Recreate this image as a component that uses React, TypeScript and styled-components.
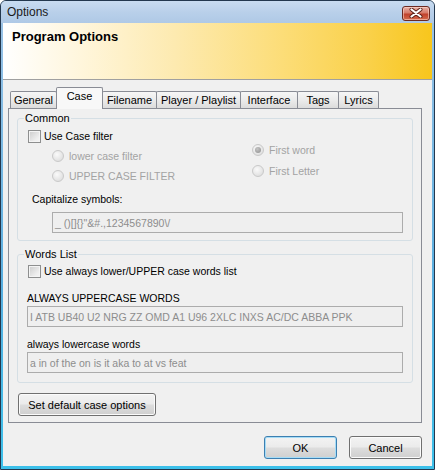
import React from "react";
import styled, { createGlobalStyle, css } from "styled-components";

const Global = createGlobalStyle`
  html, body { margin: 0; padding: 0; background: #ffffff; }
  body { font-family: "Liberation Sans", Arial, sans-serif; font-size: 10.5px; }
  * { box-sizing: border-box; }
`;

const Window = styled.div`
  width: 435px;
  height: 470px;
  border: 1px solid #23384f;
  border-radius: 6px 6px 0 0;
  background: linear-gradient(#9fc4e6, #58aee0 60%, #3cc0ea);
  display: flex;
  flex-direction: column;
  overflow: hidden;
`;

const TitleBar = styled.div`
  height: 22px;
  flex: 0 0 22px;
  display: flex;
  align-items: center;
  justify-content: space-between;
  padding: 0 4px 0 6px;
  background: linear-gradient(#c9dcf1, #b9d0ea 50%, #afc9e6);
`;

const TitleText = styled.span`
  font-family: "Liberation Sans", Arial, sans-serif;
  font-size: 12px;
  color: #1a1a1a;
`;

const CloseButton = styled.div`
  width: 28px;
  height: 15px;
  margin-top: 2px;
  border: 1px solid #6b2a22;
  border-radius: 3px;
  background: linear-gradient(#e8b0a6, #d67a69 45%, #c0412c 55%, #d46a4c);
  box-shadow: inset 0 0 0 1px rgba(255, 220, 210, 0.55);
  display: flex;
  align-items: center;
  justify-content: center;
`;

const Client = styled.div`
  flex: 1;
  margin: 0 2px 3px 2px;
  display: flex;
  flex-direction: column;
  background: #f0f0f0;
`;

const Header = styled.div`
  height: 57px;
  flex: 0 0 57px;
  border-bottom: 1px solid #a0a0a0;
  padding: 6px 0 0 9px;
  background: linear-gradient(
    90deg,
    #ffffff 0%,
    #fff6dc 18%,
    #fdeab0 40%,
    #fcdd78 65%,
    #fad14a 85%,
    #f8c61c 100%
  );
`;

const HeaderTitle = styled.div`
  font-family: "Liberation Sans", Arial, sans-serif;
  font-weight: bold;
  font-size: 13px;
  color: #000;
  line-height: 15px;
`;

const Body = styled.div`
  flex: 1;
  display: flex;
  flex-direction: column;
  padding: 7px 10px 0 5px;
`;

const TabRow = styled.div`
  height: 21px;
  display: flex;
  align-items: flex-end;
  padding-left: 2px;
`;

const Tab = styled.div<{ $w: number; $active?: boolean }>`
  width: ${(p) => p.$w}px;
  height: 17px;
  margin-left: -1px;
  border: 1px solid #898c95;
  border-bottom: none;
  border-radius: 2px 2px 0 0;
  background: linear-gradient(#f6f6f6, #ebebeb 50%, #dcdcdc 100%);
  display: flex;
  align-items: center;
  justify-content: center;
  color: #000;
  font-size: 11px;
  padding-bottom: 1px;
  &:first-child { margin-left: 0; }
  ${(p) =>
    p.$active &&
    css`
      height: 22px;
      margin-bottom: -1px;
      position: relative;
      z-index: 1;
      background: #f8f8f8;
      padding-bottom: 5px;
    `}
`;

const Panel = styled.div`
  height: 315px;
  border: 1px solid #898c95;
  background: #f0f0f0;
  padding: 9px 8px 0 8px;
  display: flex;
  flex-direction: column;
`;

const Group = styled.div<{ $h: number }>`
  position: relative;
  height: ${(p) => p.$h}px;
  border: 1px solid #d5dfe5;
  border-radius: 3px;
  display: flex;
  flex-direction: column;
  & + & { margin-top: 13px; }
`;

const GroupLabel = styled.span`
  position: absolute;
  top: -8px;
  left: 6px;
  padding: 0 1px;
  background: #f0f0f0;
  color: #000;
  font-size: 11px;
  line-height: 14px;
`;

const CheckRow = styled.label<{ $top: number }>`
  height: 20px;
  margin-top: ${(p) => p.$top}px;
  padding-left: 10px;
  display: flex;
  align-items: center;
  gap: 3px;
  color: #000;
`;

const CheckBox = styled.span`
  width: 13px;
  height: 13px;
  border: 1px solid #8e8f8f;
  background: linear-gradient(135deg, #cbcbcb, #eeeeee 70%, #f6f6f6);
  box-shadow: inset 0 0 0 1px #f4f4f4;
`;

const RadioArea = styled.div`
  display: flex;
`;

const RadioColumn = styled.div<{ $left: number; $shift?: number; $gap: number; $w: number }>`
  width: ${(p) => p.$w}px;
  margin-left: ${(p) => p.$left}px;
  margin-top: ${(p) => p.$shift ?? 0}px;
  display: flex;
  flex-direction: column;
  gap: ${(p) => p.$gap}px;
`;

const RadioRow = styled.div`
  height: 20px;
  display: flex;
  align-items: center;
  gap: 5px;
  color: #a3a3a3;
`;

const Radio = styled.span<{ $checked?: boolean }>`
  width: 12px;
  height: 12px;
  border-radius: 50%;
  border: 1px solid #c9c9c9;
  background: radial-gradient(circle at 40% 35%, #fafafa, #e2e2e2 70%, #d6d6d6);
  display: flex;
  align-items: center;
  justify-content: center;
  &::after {
    content: "";
    display: ${(p) => (p.$checked ? "block" : "none")};
    width: 6px;
    height: 6px;
    border-radius: 50%;
    background: radial-gradient(circle at 40% 35%, #c4c4c4, #8e8e8e);
  }
`;

const FieldLabel = styled.div<{ $top: number; $left: number }>`
  height: 16px;
  line-height: 16px;
  margin-top: ${(p) => p.$top}px;
  margin-left: ${(p) => p.$left}px;
  color: #000;
`;

const TextInput = styled.div<{ $top: number; $left: number; $w: number }>`
  height: 21px;
  width: ${(p) => p.$w}px;
  margin-top: ${(p) => p.$top}px;
  margin-left: ${(p) => p.$left}px;
  border: 1px solid #acacac;
  background: #efefef;
  color: #8d8d8d;
  padding: 0 2px;
  display: flex;
  align-items: center;
  white-space: pre;
`;

const Button = styled.div<{ $w: number; $focused?: boolean }>`
  width: ${(p) => p.$w}px;
  height: 23px;
  border: 1px solid #707070;
  border-radius: 3px;
  background: linear-gradient(#f3f3f3, #ebebeb 48%, #dddddd 52%, #cfcfcf);
  box-shadow: inset 0 0 0 1px #fbfbfb;
  display: flex;
  align-items: center;
  justify-content: center;
  color: #000;
  font-size: 11px;
  ${(p) =>
    p.$focused &&
    css`
      border-color: #3c7fb1;
      box-shadow: inset 0 0 0 1px #a6dcf6;
    `}
`;

const PanelButtonWrap = styled.div`
  margin: 10px 0 0 1px;
`;

const Footer = styled.div`
  display: flex;
  justify-content: flex-end;
  gap: 12px;
  margin-top: 13px;
`;

const CloseIcon = () => (
  <svg width="14" height="10" viewBox="0 0 14 10">
    <path d="M2.5 1.5 L11.5 8.5 M11.5 1.5 L2.5 8.5" stroke="#5a2018" strokeWidth="4" strokeLinecap="round" />
    <path d="M2.5 1.5 L11.5 8.5 M11.5 1.5 L2.5 8.5" stroke="#ffffff" strokeWidth="2.2" strokeLinecap="round" />
  </svg>
);

const tabs: { label: string; w: number; active?: boolean }[] = [
  { label: "General", w: 47 },
  { label: "Case", w: 47, active: true },
  { label: "Filename", w: 55 },
  { label: "Player / Playlist", w: 85 },
  { label: "Interface", w: 58 },
  { label: "Tags", w: 42 },
  { label: "Lyrics", w: 41 },
];

export default function App() {
  return (
    <>
      <Global />
      <Window>
        <TitleBar>
          <TitleText>Options</TitleText>
          <CloseButton>
            <CloseIcon />
          </CloseButton>
        </TitleBar>
        <Client>
          <Header>
            <HeaderTitle>Program Options</HeaderTitle>
          </Header>
          <Body>
            <TabRow>
              {tabs.map((t) => (
                <Tab key={t.label} $w={t.w} $active={t.active}>
                  {t.label}
                </Tab>
              ))}
            </TabRow>
            <Panel>
              <Group $h={123}>
                <GroupLabel>Common</GroupLabel>
                <CheckRow $top={7}>
                  <CheckBox />
                  Use Case filter
                </CheckRow>
                <RadioArea>
                  <RadioColumn $left={34} $gap={0} $w={200}>
                    <RadioRow>
                      <Radio />
                      lower case filter
                    </RadioRow>
                    <RadioRow>
                      <Radio />
                      UPPER CASE FILTER
                    </RadioRow>
                  </RadioColumn>
                  <RadioColumn $left={0} $shift={-6} $gap={1} $w={150}>
                    <RadioRow>
                      <Radio $checked />
                      First word
                    </RadioRow>
                    <RadioRow>
                      <Radio />
                      First Letter
                    </RadioRow>
                  </RadioColumn>
                </RadioArea>
                <FieldLabel $top={5} $left={14}>
                  Capitalize symbols:
                </FieldLabel>
                <TextInput $top={5} $left={34} $w={351}>
                  {'_ ()[]{}"&#.,1234567890\\/'}
                </TextInput>
              </Group>
              <Group $h={129}>
                <GroupLabel>Words List</GroupLabel>
                <CheckRow $top={6}>
                  <CheckBox />
                  Use always lower/UPPER case words list
                </CheckRow>
                <FieldLabel $top={9} $left={9}>
                  ALWAYS UPPERCASE WORDS
                </FieldLabel>
                <TextInput $top={0} $left={9} $w={376}>
                  I ATB UB40 U2 NRG ZZ OMD A1 U96 2XLC INXS AC/DC ABBA PPK
                </TextInput>
                <FieldLabel $top={9} $left={9}>
                  always lowercase words
                </FieldLabel>
                <TextInput $top={0} $left={9} $w={376}>
                  a in of the on is it aka to at vs feat
                </TextInput>
              </Group>
              <PanelButtonWrap>
                <Button $w={138}>Set default case options</Button>
              </PanelButtonWrap>
            </Panel>
            <Footer>
              <Button $w={73} $focused>
                OK
              </Button>
              <Button $w={73}>Cancel</Button>
            </Footer>
          </Body>
        </Client>
      </Window>
    </>
  );
}
